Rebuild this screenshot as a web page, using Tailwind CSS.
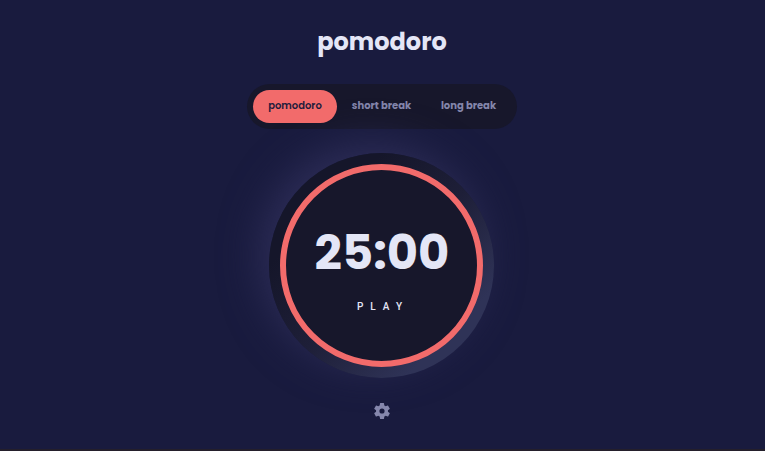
<!DOCTYPE html>
<html lang="en">
<head>
<meta charset="utf-8">
<title>pomodoro</title>
<script src="https://cdn.jsdelivr.net/npm/@tailwindcss/browser@4"></script>
</head>
<body class="h-[451px] overflow-hidden bg-[#191b3e] font-['Poppins','Inter',sans-serif] text-[#e4e6f6]">
<main class="flex h-full flex-col items-center border-b-2 border-[#241f2b] pr-px">
  <h1 class="mt-[24px] h-[36px] whitespace-nowrap text-[24px] leading-[36px] font-bold">pomodoro</h1>
  <nav class="mt-[23.5px] flex h-[45px] w-[270px] shrink-0 items-center rounded-full bg-[#17172b] pl-[6px] text-[10px] leading-[15px] font-semibold text-[#8486ab]">
    <button class="relative z-10 h-[33px] w-[84px] rounded-full bg-[#f26b6b] pb-[2px] text-[#1e1c3c]">pomodoro</button>
    <button class="h-[33px] w-[89px] pb-[2px] font-bold whitespace-nowrap">short break</button>
    <button class="h-[33px] w-[85px] pb-[2px] font-bold whitespace-nowrap">long break</button>
  </nav>
  <section class="mt-[24px] mr-px flex size-[225px] shrink-0 items-center justify-center rounded-full bg-linear-to-br from-[#15162a] from-25% via-[#1e1f38] via-52% to-[#2f3357] to-80% shadow-[-10px_-10px_38px_#2c2c56]">
    <div class="flex size-[203px] flex-col items-center rounded-full border-6 border-[#f26b6b] bg-[#17172b]">
      <div class="mt-[53px] ml-px h-[60px] text-[48px] leading-[60px] font-bold">25:00</div>
      <button class="mt-[17px] ml-[3px] h-[14px] font-['Roboto',sans-serif] text-[10px] leading-[14px] font-medium tracking-[7px]">PLAY</button>
    </div>
  </section>
  <button class="mt-[24px] flex size-[18px] items-center justify-center" aria-label="Settings">
    <svg class="size-[20px] shrink-0 text-[#8587ac]" viewBox="0 0 24 24" fill="currentColor"><path d="M19.14 12.94c.04-.3.06-.61.06-.94s-.02-.64-.07-.94l2.03-1.58a.49.49 0 0 0 .12-.61l-1.92-3.32a.49.49 0 0 0-.59-.22l-2.39.96a7 7 0 0 0-1.62-.94l-.36-2.54a.48.48 0 0 0-.48-.41h-3.84a.48.48 0 0 0-.47.41l-.36 2.54a7 7 0 0 0-1.62.94l-2.39-.96a.48.48 0 0 0-.59.22L2.74 8.87a.48.48 0 0 0 .12.61l2.03 1.58a6 6 0 0 0 0 1.88l-2.03 1.58a.49.49 0 0 0-.12.61l1.92 3.32c.12.22.37.29.59.22l2.39-.96a7 7 0 0 0 1.62.94l.36 2.54c.05.24.24.41.48.41h3.84c.24 0 .44-.17.47-.41l.36-2.54a7 7 0 0 0 1.62-.94l2.39.96c.22.08.47 0 .59-.22l1.92-3.32a.48.48 0 0 0-.12-.61zM12 15.1A3.1 3.1 0 1 1 12 8.9a3.1 3.1 0 0 1 0 6.2z"/></svg>
  </button>
</main>
</body>
</html>
